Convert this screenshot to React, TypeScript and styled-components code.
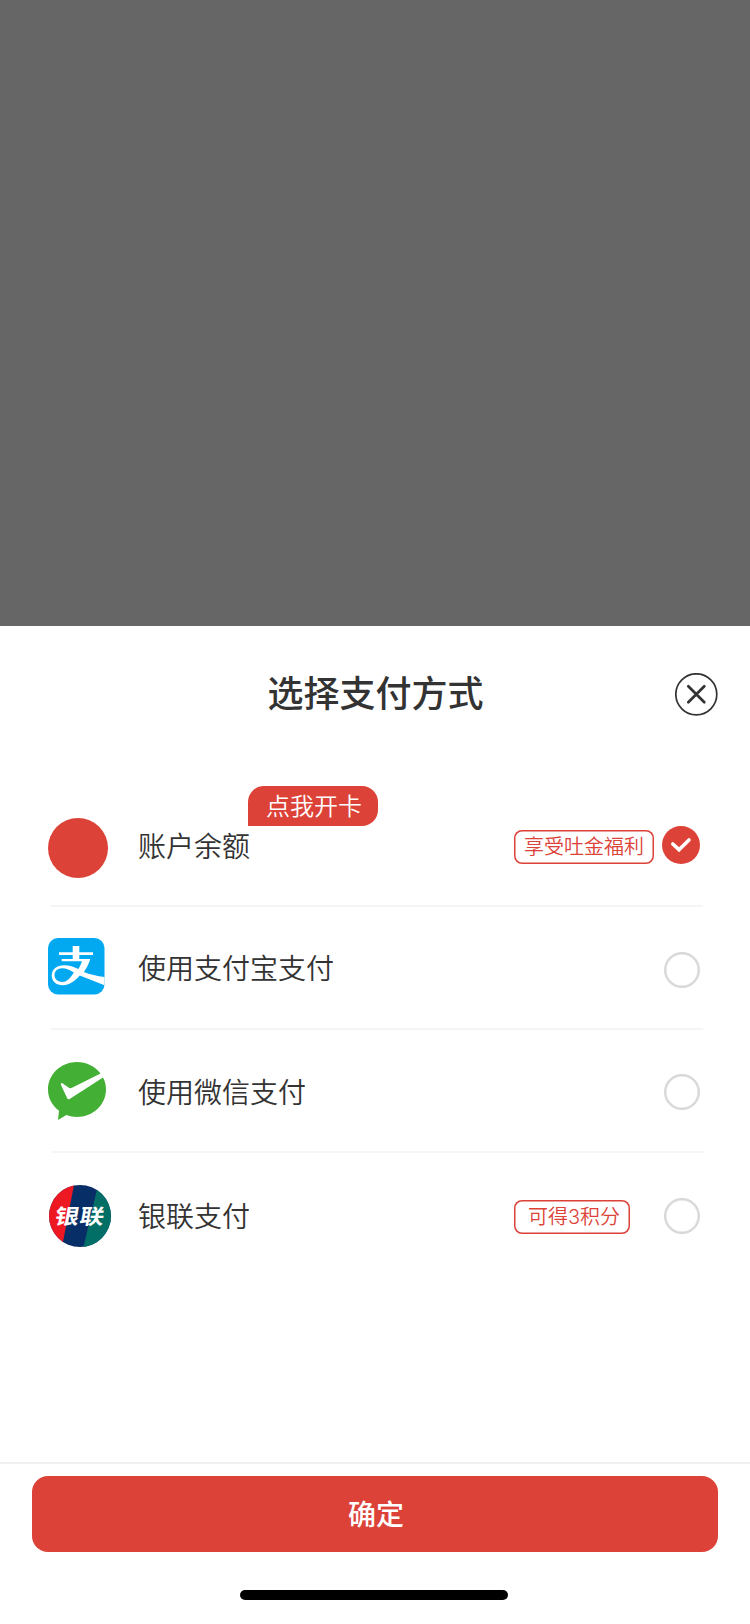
import React, { useState } from 'react';
import styled, { createGlobalStyle, css } from 'styled-components';

const RED = '#dc4238';

const GlobalStyle = createGlobalStyle`
  * { box-sizing: border-box; }
  body {
    margin: 0;
    background: #666;
    font-family: "Noto Sans CJK SC", sans-serif;
    color: #333;
  }
`;

const Overlay = styled.div`
  width: 750px;
  height: 1624px;
  padding-top: 626px;
  background: #666;
  overflow: hidden;
`;

const Sheet = styled.section`
  display: flex;
  flex-direction: column;
  height: 998px;
  background: #fff;
`;

const Header = styled.header`
  display: grid;
  grid-template-columns: 43px 1fr 43px;
  align-items: center;
  height: 136px;
  padding: 0 32px;
`;

const Title = styled.h1`
  grid-column: 2;
  margin: 0;
  padding: 0 0 6px 1px;
  font-size: 36px;
  font-weight: 500;
  line-height: 52px;
  text-align: center;
`;

const CloseButton = styled.button`
  width: 43px;
  height: 43px;
  padding: 0;
  border: 0;
  background: none;
  svg { display: block; }
`;

const MethodList = styled.ul`
  flex: 1;
  margin: 0;
  padding: 21px 47px 0 48px;
  list-style: none;
`;

const Method = styled.li<{ $height: number; $last?: boolean }>`
  display: flex;
  flex-direction: column;
  height: ${(p) => p.$height}px;
  &::after {
    content: '';
    display: ${(p) => (p.$last ? 'none' : 'block')};
    height: 2px;
    margin-left: 3px;
    background: #f5f5f5;
  }
`;

const MethodRow = styled.div`
  flex: 1;
  display: flex;
  align-items: center;
`;

const LogoSlot = styled.div<{ $top?: number; $bottom?: number; $left?: number }>`
  width: 90px;
  padding-top: ${(p) => p.$top ?? 0}px;
  padding-bottom: ${(p) => p.$bottom ?? 0}px;
  padding-left: ${(p) => p.$left ?? 0}px;
  svg { display: block; overflow: visible; }
`;

const Name = styled.span<{ $top?: number; $bottom?: number }>`
  position: relative;
  padding-top: ${(p) => p.$top ?? 0}px;
  padding-bottom: ${(p) => p.$bottom ?? 0}px;
  font-size: 28px;
  font-weight: 350;
  line-height: 40px;
  white-space: nowrap;
`;

const Promo = styled.span`
  position: absolute;
  left: 110px;
  bottom: 39px;
  width: 130px;
  height: 40px;
  padding-left: 2px;
  border-radius: 16px 16px 16px 0;
  background: ${RED};
  color: #fff;
  font-size: 24px;
  line-height: 37px;
  text-align: center;
`;

const Trailing = styled.div<{ $top?: number }>`
  display: flex;
  align-items: center;
  justify-content: space-between;
  width: 186px;
  margin-left: auto;
  margin-right: 3px;
  padding-top: ${(p) => p.$top ?? 0}px;
`;

const Tag = styled.span<{ $width: number; $drop: number; $indent?: number }>`
  width: ${(p) => p.$width}px;
  height: 34px;
  margin-top: ${(p) => p.$drop}px;
  padding-left: ${(p) => p.$indent ?? 0}px;
  border-radius: 8px;
  box-shadow: inset 0 0 0 1.5px ${RED};
  color: ${RED};
  font-family: Inter, "Noto Sans CJK SC", sans-serif;
  font-size: 20px;
  font-weight: 350;
  line-height: 35px;
  text-align: center;
  white-space: nowrap;
`;

const Radio = styled.button<{ $checked: boolean }>`
  width: 36px;
  height: 36px;
  margin-left: auto;
  padding: 0;
  border: 2px solid #d8d8d8;
  border-radius: 50%;
  background: #fff;
  box-shadow: inset 0 0 0 0.5px #d8d8d8;
  svg { display: block; }
  ${(p) =>
    p.$checked &&
    css`
      width: 38px;
      height: 38px;
      border: 0;
      background: ${RED};
      box-shadow: none;
    `}
`;

const Footer = styled.footer`
  display: flex;
  flex-direction: column;
  align-items: center;
  height: 162px;
  padding-top: 12px;
  border-top: 2px solid #f0f0f0;
`;

const Confirm = styled.button`
  width: 686px;
  height: 76px;
  padding: 0 0 2px 2px;
  border: 0;
  border-radius: 16px;
  background: ${RED};
  color: #fff;
  font: 500 28px/74px "Noto Sans CJK SC", sans-serif;
`;

const HomeIndicator = styled.div`
  width: 268px;
  height: 10px;
  margin: 38px 2px 0 0;
  border-radius: 5px;
  background: #000;
`;

const BalanceLogo = () => (
  <svg width="60" height="60" viewBox="0 0 60 60">
    <circle cx="30" cy="30" r="30" fill={RED} />
  </svg>
);

const AlipayLogo = () => (
  <svg width="57" height="57" viewBox="0 0 57 57">
    <rect width="56.500" height="56.500" rx="10" fill="#02a9f1" />
    <path d="M24.700 8h6.600v6.300H45V17H31.300v4H42.300c-1.500 5-3.700 9.300-6.500 13 6.200 2.300 13 4.200 20.700 5v8.200L31.800 37.600C26.500 43.600 21 47.200 14.800 47.200 8 47.200 3.700 43 3.700 37.400 3.700 31.300 9 27.300 16 27.300c5.300 0 9.700 1.600 14.300 3.600 1.600-2.200 2.800-4.700 3.700-7.600H13.700V21h11v-4H11v-2.700h13.700zM25.800 34.600C22 32 18.500 30.200 14 30.200c-4.600 0-7.500 3-7.500 6.800 0 4 3.200 7 8.200 7 4.400 0 7.800-4.200 11.100-9.400z" fill="#fff" fillRule="evenodd" />
  </svg>
);

const WechatPayLogo = () => (
  <svg width="58" height="58" viewBox="0 0 58 58">
    <path d="M29 0C13 0 0 12.300 0 27.500c0 8.600 4.200 16.200 11 21.300L10 58l8.300-4.900C21.700 54.300 25.200 55 29 55c16 0 29-12.300 29-27.500 0-4.300-1-8.400-3-12.100L22 36.800c-1.400.9-2.200.7-2.900-.7L13 23c-.6-1.600.4-2.400 1.800-1.500l5.700 4c1.100.8 2.300.8 3.500.2L52.500 11.600C47.200 4.600 38.700 0 29 0z" fill="#43b035" />
  </svg>
);

const UnionPayLogo = () => (
  <svg width="62" height="62" viewBox="0 0 62 62">
    <defs>
      <clipPath id="unionpay-disc">
        <circle cx="31" cy="31" r="31" />
      </clipPath>
    </defs>
    <g clipPath="url(#unionpay-disc)">
      <rect width="62" height="62" fill="#082e68" />
      <path d="M0 0h25L13 62H0z" fill="#ee1822" />
      <path d="M49 0h13v62H34.500z" fill="#026f66" />
    </g>
    <text
      x="0"
      y="0"
      transform="translate(4.800 39) skewX(-10) scale(1.150 1)"
      fill="#fff"
      fontFamily='"Noto Sans CJK SC", sans-serif'
      fontSize="21"
      fontWeight="700"
      letterSpacing="0.800"
    >
      银联
    </text>
  </svg>
);

const CheckMark = () => (
  <svg width="38" height="38" viewBox="0 0 38 38">
    <path d="M10.800 18l6.200 5.700 10-9.700" fill="none" stroke="#fff" strokeWidth="3.600" strokeLinecap="round" />
  </svg>
);

interface PaymentMethod {
  id: string;
  name: string;
  logo: React.ReactNode;
  height: number;
  logoTop?: number;
  logoBottom?: number;
  logoLeft?: number;
  nameTop?: number;
  nameBottom?: number;
  trailingTop?: number;
  promo?: string;
  tag?: { text: string; width: number; drop: number; indent?: number };
}

const METHODS: PaymentMethod[] = [
  {
    id: 'balance',
    name: '账户余额',
    logo: <BalanceLogo />,
    height: 124,
    logoTop: 7,
    nameTop: 2,
    trailingTop: 2,
    promo: '点我开卡',
    tag: { text: '享受吐金福利', width: 140, drop: 4 },
  },
  { id: 'alipay', name: '使用支付宝支付', logo: <AlipayLogo />, height: 123, logoBottom: 3, nameBottom: 2, trailingTop: 4 },
  { id: 'wechat', name: '使用微信支付', logo: <WechatPayLogo />, height: 123, trailingTop: 2 },
  {
    id: 'unionpay',
    name: '银联支付',
    logo: <UnionPayLogo />,
    height: 126,
    logoLeft: 1,
    nameBottom: 2,
    tag: { text: '可得3积分', width: 116, drop: 2, indent: 4 },
  },
];

export default function App() {
  const [selected, setSelected] = useState('balance');
  return (
    <>
      <GlobalStyle />
      <Overlay>
        <Sheet>
          <Header>
            <Title>选择支付方式</Title>
            <CloseButton aria-label="关闭">
              <svg width="43" height="43" viewBox="0 0 43 43" fill="none" stroke="#333">
                <circle cx="21.300" cy="21.300" r="20.500" strokeWidth="1.700" />
                <path d="M13.300 13.300l16 16M29.300 13.300l-16 16" strokeWidth="2.700" strokeLinecap="round" />
              </svg>
            </CloseButton>
          </Header>
          <MethodList>
            {METHODS.map((m, i) => (
              <Method key={m.id} $height={m.height} $last={i === METHODS.length - 1}>
                <MethodRow>
                  <LogoSlot $top={m.logoTop} $bottom={m.logoBottom} $left={m.logoLeft}>{m.logo}</LogoSlot>
                  <Name $top={m.nameTop} $bottom={m.nameBottom}>
                    {m.name}
                    {m.promo && <Promo>{m.promo}</Promo>}
                  </Name>
                  <Trailing $top={m.trailingTop}>
                    {m.tag && (
                      <Tag $width={m.tag.width} $drop={m.tag.drop} $indent={m.tag.indent}>
                        {m.tag.text}
                      </Tag>
                    )}
                    <Radio aria-label={m.name} $checked={selected === m.id} onClick={() => setSelected(m.id)}>
                      {selected === m.id && <CheckMark />}
                    </Radio>
                  </Trailing>
                </MethodRow>
              </Method>
            ))}
          </MethodList>
          <Footer>
            <Confirm>确定</Confirm>
            <HomeIndicator />
          </Footer>
        </Sheet>
      </Overlay>
    </>
  );
}
